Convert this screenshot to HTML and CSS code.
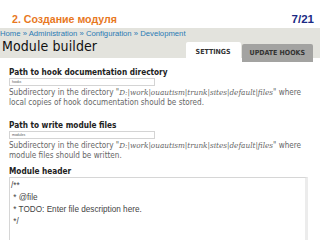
FILE: index.html
```html
<html>
  <head>
    <link rel="stylesheet" href="styles.css">
  </head>
  <body>
    <div class="slide-head">
      <span class="slide-title">2. Создание модуля</span>
      <span class="slide-num">7/21</span>
    </div>

    <div class="admin-bar">
      <div class="breadcrumb">
        <a href="#">Home</a> » <a href="#">Administration</a> » <a href="#">Configuration</a> » <a href="#">Development</a>
      </div>
      <div class="title-row">
        <h1>Module builder</h1>
        <div class="tabs">
          <span class="tab active">SETTINGS</span>
          <span class="tab">UPDATE HOOKS</span>
        </div>
      </div>
    </div>

    <div class="form">
      <div class="form-item">
        <label>Path to hook documentation directory</label>
        <div class="text-input">hooks</div>
        <p class="description">Subdirectory in the directory "<em>D:|work|ouautism|trunk|sites|default|files</em>" where local copies of hook documentation should be stored.</p>
      </div>

      <div class="form-item">
        <label>Path to write module files</label>
        <div class="text-input">modules</div>
        <p class="description">Subdirectory in the directory "<em>D:|work|ouautism|trunk|sites|default|files</em>" where module files should be written.</p>
      </div>

      <div class="form-item last">
        <label>Module header</label>
        <div class="textarea">
          <div>/**</div>
          <div>&nbsp;* @file</div>
          <div>&nbsp;* TODO: Enter file description here.</div>
          <div>&nbsp;*/</div>
        </div>
      </div>
    </div>
  </body>
</html>
```

FILE: styles.css
```css
body { margin: 0; width: 320px; height: 240px; overflow: hidden; background: #fff; font-family: "Liberation Sans", Arial, sans-serif; }

.slide-head { display: flex; justify-content: space-between; align-items: flex-end; height: 25px; padding: 0 6px 0 12px; }
.slide-title { color: #e8781e; font-weight: bold; font-size: 10.6px; }
.slide-num { color: #1b2a84; font-weight: bold; font-size: 11.5px; }

.admin-bar { margin-top: 3px; background: #e3e3dd; height: 30px; padding-right: 7px; display: flex; flex-direction: column; }
.breadcrumb { font-size: 7.7px; color: #2a7ab4; line-height: 9px; padding-top: 1px; white-space: nowrap; }
.breadcrumb a { color: #2a7ab4; text-decoration: none; }
.title-row { display: flex; justify-content: space-between; align-items: flex-end; flex: 1; }
h1 { margin: 0 0 8px 2px; font-size: 14px; font-weight: normal; color: #111; font-family: "DejaVu Sans Condensed", "DejaVu Sans", sans-serif; letter-spacing: 0.1px; }
.tabs { display: flex; align-items: flex-end; gap: 1px; }
.tab { font-family: "DejaVu Sans Condensed", "DejaVu Sans", sans-serif; font-size: 7px; font-weight: bold; color: #333; background: #a3a3a1; height: 18px; line-height: 18px; padding: 0 8px; border-radius: 2px 2px 0 0; }
.tab.active { background: #fff; height: 20px; line-height: 20px; padding: 0 10px; }

.form { padding: 0 9px; }
.form-item { margin-top: 9px; }
.form-item + .form-item { margin-top: 13px; }
.form-item.last { margin-top: 6px; }
label { display: block; font-family: "DejaVu Sans Condensed", "DejaVu Sans", sans-serif; font-weight: bold; font-size: 8.2px; color: #222; line-height: 11px; }
.text-input { width: 142px; height: 6px; border: 1px solid #d4d4d4; font-size: 3.5px; line-height: 6px; color: #555; padding-left: 2px; margin-top: 0; }
.description { margin: 1px 0 0; font-family: "DejaVu Sans Condensed", "DejaVu Sans", sans-serif; font-size: 8.1px; line-height: 10px; color: #666; }
.description em { font-family: "DejaVu Serif Condensed", "DejaVu Serif", serif; }
.textarea { width: 293px; height: 80px; border: 1px solid #d6d6d6; border-right: 3px solid #ececec; font-family: "Liberation Sans", Arial, sans-serif; font-size: 8.2px; line-height: 12px; color: #444; padding: 2px 1px 0; }
```
